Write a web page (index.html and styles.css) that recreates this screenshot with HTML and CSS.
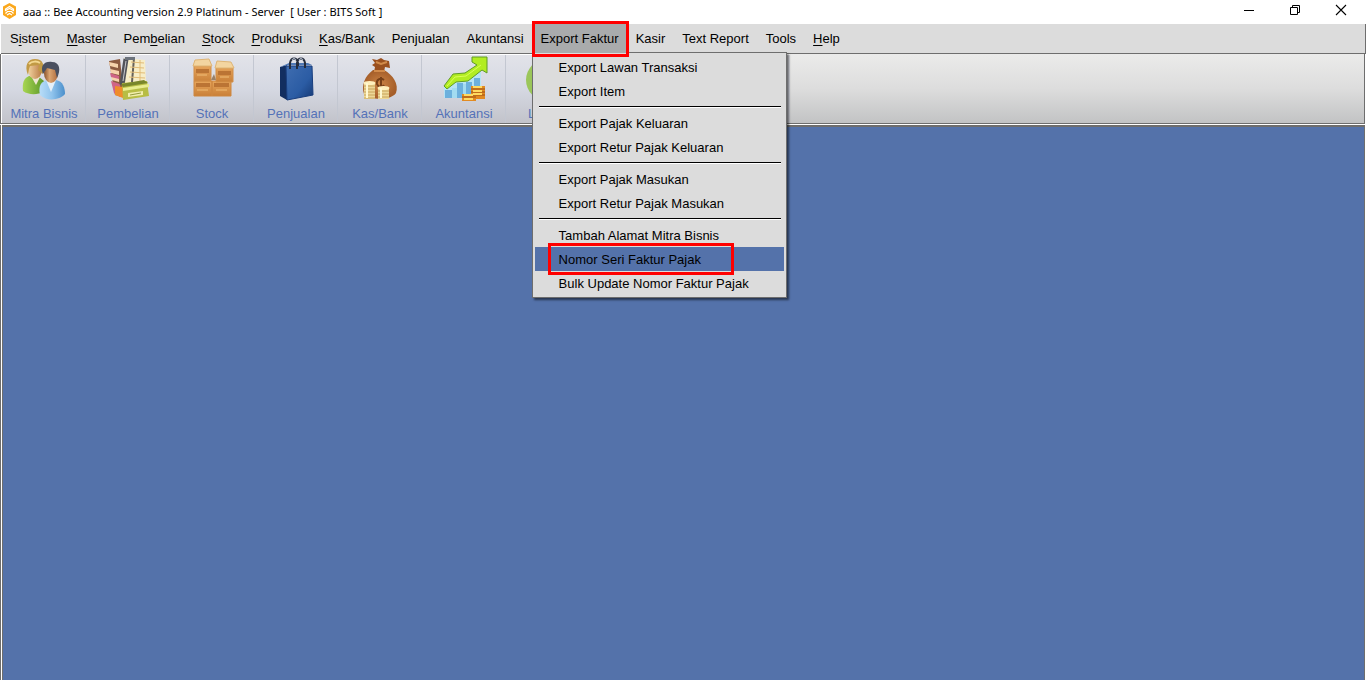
FILE: index.html
```
<!DOCTYPE html>
<html lang="id">
<head>
<meta charset="utf-8">
<title>Bee Accounting</title>
<link rel="stylesheet" href="styles.css">
</head>
<body>
<header class="titlebar">
  <svg class="logo" width="16" height="16" viewBox="0 0 16 16"><path d="M7.500 0 14 3.500V12L7.500 16 1 12V3.500z" fill="#fba81c"/><path d="M3.500 7.500V6L7.500 3.500l4 2.500v1.500l-4-2zM3.500 10.500l2-2h4l2 2M5 12l2.500-1.500L10 12" fill="none" stroke="#fff" stroke-width="1.200"/></svg>
  <h1 class="title">aaa :: Bee Accounting version 2.9 Platinum - Server &nbsp;[ User : BITS Soft ]</h1>
  <div class="window-controls">
    <button class="win" aria-label="Minimize"><svg width="12" height="12"><path d="M1 6.500h10" stroke="#000"/></svg></button>
    <button class="win" aria-label="Restore"><svg width="12" height="12" fill="none" stroke="#000"><path d="M1.500 3.500h7v7h-7zM3.500 3V1.500h7v7H9"/></svg></button>
    <button class="win" aria-label="Close"><svg width="12" height="12"><path d="M1 1l10 10M11 1 1 11" stroke="#000" stroke-width="1.100"/></svg></button>
  </div>
</header>
<nav class="menubar">
  <button class="menu">S<u>i</u>stem</button>
  <button class="menu"><u>M</u>aster</button>
  <button class="menu">Pem<u>b</u>elian</button>
  <button class="menu"><u>S</u>tock</button>
  <button class="menu"><u>P</u>roduksi</button>
  <button class="menu"><u>K</u>as/Bank</button>
  <button class="menu">Penjualan</button>
  <button class="menu">Akuntansi</button>
  <div class="menu-open">
    <button class="menu active">Export Faktur</button>
    <div class="dropdown">
      <button class="item">Export Lawan Transaksi</button>
      <button class="item">Export Item</button>
      <hr class="sep">
      <button class="item">Export Pajak Keluaran</button>
      <button class="item">Export Retur Pajak Keluaran</button>
      <hr class="sep">
      <button class="item">Export Pajak Masukan</button>
      <button class="item">Export Retur Pajak Masukan</button>
      <hr class="sep">
      <button class="item">Tambah Alamat Mitra Bisnis</button>
      <button class="item selected">Nomor Seri Faktur Pajak</button>
      <button class="item">Bulk Update Nomor Faktur Pajak</button>
    </div>
  </div>
  <button class="menu">Kasir</button>
  <button class="menu">Text Report</button>
  <button class="menu">Tools</button>
  <button class="menu"><u>H</u>elp</button>
</nav>
<div class="toolbar">
  <div class="tools">
    <button class="tool">
      <svg width="48" height="48" viewBox="0 0 48 48">
        <defs>
          <linearGradient id="skin" x1="0" x2="1"><stop offset="0" stop-color="#f2d3a0"/><stop offset="1" stop-color="#b97a45"/></linearGradient>
          <linearGradient id="skin2" x1="0" x2="1"><stop offset="0" stop-color="#8a542d"/><stop offset=".4" stop-color="#dba571"/><stop offset="1" stop-color="#b06b3c"/></linearGradient>
          <linearGradient id="green" x1="0" x2="1"><stop offset="0" stop-color="#a8d653"/><stop offset="1" stop-color="#5c9728"/></linearGradient>
          <linearGradient id="shirt" x1="0" x2="1"><stop offset="0" stop-color="#b9ddf8"/><stop offset=".5" stop-color="#8fc3ec"/><stop offset="1" stop-color="#4b8fcb"/></linearGradient>
        </defs>
        <path d="M3 36c-1-8 1-13 6-15l10 1 5 4v11c-7 3-16 3-21-1z" fill="url(#green)"/>
        <path d="m11 21 5 9 4-8z" fill="#eee6d2"/>
        <ellipse cx="15" cy="15" rx="7" ry="9" fill="url(#skin)"/>
        <path d="M8 20C4 10 8 4 15 4c8 0 10 6 8 15l-5-4 1-5-9 1-1 3z" fill="#c29a45"/>
        <path d="M9 9c3-3 8-3 11-1" stroke="#f3d890" stroke-width="2" fill="none"/>
        <path d="M20 40c-2-9 1-14 8-15h8c7 1 9 8 9 14-5 6-18 8-25 1z" fill="url(#shirt)"/>
        <path d="m26 25 5 12 5-12z" fill="#e6f0f8"/>
        <ellipse cx="31" cy="18" rx="7" ry="10" fill="url(#skin2)"/>
        <path d="M23 19c-3-8 1-13 9-12 8 0 9 8 5 16l-2-8-8-2z" fill="#4a5060"/>
      </svg>
      <span>Mitra Bisnis</span>
    </button>
    <button class="tool">
      <svg width="48" height="48" viewBox="0 0 48 48">
        <path d="M5 6 16 4l4 38-9-2z" fill="#8d5b40"/>
        <path d="m5 7 9 2v4L6 11zM6 14l9 2v4l-8-2zM7 21l8 2v4l-7-2z" fill="#f6d3ac"/>
        <path d="m6 18 9 3v3l-8-2zM7 26l9 3v13l-6-4z" fill="#cf6487"/>
        <path d="m11 31 8 1v11l-8-3z" fill="#ef8c2b"/>
        <path d="m20 3 21 2 1 22-24 4z" fill="#f7edc7"/>
        <path d="m22 4-4 26" stroke="#51535a" stroke-width="5"/>
        <path d="m22 6-3 20" stroke="#c5c7ca" stroke-width="1"/>
        <path d="m30 3-2 24" stroke="#66615a" stroke-width="2"/>
        <path d="m27 7 13 1M26 12l14 1M26 17l15 1M25 22l16 1M36 5v21" stroke="#e2bc77" stroke-width="1"/>
        <path d="M21 2h10v3H21z" fill="#6c737c"/>
        <path d="m18 28 25-2 2 15-26 4z" fill="#b7bd44"/>
        <path d="m17 29 23-4 4 3-25 4z" fill="#79862b"/>
        <path d="m19 33 26-4v3l-26 4z" fill="#e9ed91"/>
        <path d="m24 38 15-2v4l-15 2z" fill="#f1edab"/>
        <path d="m26 40 11-2" stroke="#929b3e"/>
      </svg>
      <span>Pembelian</span>
    </button>
    <button class="tool">
      <svg width="48" height="48" viewBox="0 0 48 48">
        <defs><linearGradient id="box" x2="0" y2="1"><stop offset="0" stop-color="#e7a55b"/><stop offset="1" stop-color="#c98038"/></linearGradient></defs>
        <path d="M6 26h18v15H6zM24 26h19v15H24z" fill="url(#box)" stroke="#ce8740"/>
        <path d="M6 11h17v15H6zM28 13h17v14H28z" fill="url(#box)" stroke="#d28e48"/>
        <path d="m5 11 2-6 14-1 3 7zM27 13l2-7 14 1 3 6z" fill="#f3d5a0" stroke="#dfb574"/>
        <path d="M8 14h13v4H8zM30 16h13v4H30zM8 28h14v4H8zM26 28h15v4H26z" fill="#bb7434"/>
        <path d="M9 20h10M32 22h9M9 35h11M28 35h11" stroke="#f0bd76" stroke-width="1"/>
        <path d="m23 25 3-6 2 6z" fill="#998169"/>
      </svg>
      <span>Stock</span>
    </button>
    <button class="tool">
      <svg width="48" height="48" viewBox="0 0 48 48">
        <defs><linearGradient id="bag" x2="1" y2="1"><stop offset="0" stop-color="#3f6db0"/><stop offset=".6" stop-color="#2b5ca4"/><stop offset="1" stop-color="#153873"/></linearGradient></defs>
        <path d="m8 12 7-2v35l-7-4z" fill="#122e60"/>
        <path d="M14 11h26l1 29-26 5z" fill="url(#bag)" stroke="#183d7d"/>
        <path d="m8 12 8-2h24l-4-2H17z" fill="#4f79b6"/>
        <path d="M18 14V8c1-6 7-6 8 0v3M25 14V8c1-6 7-6 8 0v5" fill="none" stroke="#252c3b" stroke-width="2"/>
        <path d="M20 5c1-2 3-2 4 0M27 5c1-2 3-2 4 0" fill="none" stroke="#c9d5e7"/>
      </svg>
      <span>Penjualan</span>
    </button>
    <button class="tool">
      <svg width="48" height="48" viewBox="0 0 48 48">
        <defs><radialGradient id="sack"><stop offset="0" stop-color="#cc8446"/><stop offset="1" stop-color="#a55e29"/></radialGradient></defs>
        <path d="M17 15C9 21 5 30 8 39c5 6 27 7 32-1 3-9-3-18-12-23z" fill="url(#sack)"/>
        <path d="m16 4 5 1 4-2 3 2 5 1 1 7-5-1-1 5H18l1-5-3-2 3-2z" fill="#9a501f"/>
        <path d="m20 7 5 2 6-2M18 16h11" fill="none" stroke="#d28b4a" stroke-width="2"/>
        <path d="M28 25c-4-3-8 0-7 4 1 3 5 4 7 1M25 22v11" fill="none" stroke="#774018" stroke-width="2"/>
        <path d="M8 28h11v16H8zM22 33h11v11H22z" fill="#edd797"/>
        <path d="M8 31h11M8 34h11M8 37h11M8 40h11M8 43h11M22 36h11M22 39h11M22 42h11" stroke="#c8a45b"/>
        <ellipse cx="13.500" cy="28" rx="6" ry="2" fill="#fff0bd"/><ellipse cx="27.500" cy="33" rx="6" ry="2" fill="#fff0bd"/>
        <path d="M11 28v15M25 33v10" stroke="#fff8d2" stroke-width="2"/>
      </svg>
      <span>Kas/Bank</span>
    </button>
    <button class="tool">
      <svg width="48" height="48" viewBox="0 0 48 48">
        <path d="M4 32 15 24l11-2 15-10v31H4z" fill="#b7e3f5"/>
        <path d="M5 35h7v8H5zM17 28h6v15h-6zM26 27h6v16h-6zM34 23h6v20h-6z" fill="#6cb0dd"/>
        <path d="M12 33h5v10h-5zM23 29h3v14h-3z" fill="#a3dcf1"/>
        <path d="M4 31 13 19l12-1 12-8-5-3V2h15v16l-5-3-14 11-12 1L7 34z" fill="#b2ed22" stroke="#619b27"/>
        <path d="m7 31 8-9 11-1 15-11" fill="none" stroke="#daff56"/>
        <path d="M31 31h14v13H31zM22 39h14v7H22z" fill="#e28b22"/>
        <path d="M31 34h14M31 37h14M31 40h14M22 42h14" stroke="#9d5015"/>
        <path d="M33 32h9M33 36h9M33 39h9M24 40h9M24 44h9" stroke="#ffdb62" stroke-width="2"/>
      </svg>
      <span>Akuntansi</span>
    </button>
    <button class="tool clipped">
      <svg width="48" height="48" viewBox="0 0 48 48"><circle cx="23" cy="25" r="21" fill="#9bc65a"/></svg>
      <span>L</span>
    </button>
  </div>
</div>
<main class="workspace"></main>
</body>
</html>
```
FILE: styles.css
```
* { box-sizing: border-box; }
body {
  margin: 0;
  min-height: 100vh;
  display: flex;
  flex-direction: column;
  background: #fff;
  color: #000;
  font: 13px/16px "Liberation Sans", Arial, sans-serif;
}
button {
  border: 0;
  padding: 0;
  background: none;
  color: inherit;
  font: inherit;
}
svg { display: block; flex-shrink: 0; }
.titlebar {
  height: 24px;
  display: flex;
  align-items: center;
  padding-left: 2px;
}
.title {
  flex: 1;
  margin: 0 0 0 5px;
  font: 11px/22px "Noto Sans", sans-serif;
}
.logo { margin-bottom: 2px; }
.window-controls { display: flex; padding-right: 2px; }
.win {
  width: 46px;
  height: 24px;
  display: flex;
  align-items: center;
  justify-content: center;
  padding-bottom: 4px;
}
.menubar {
  height: 30px;
  display: flex;
  gap: 1px;
  background: #dcdcdc;
  margin-left: 1px;
  padding-left: 1px;
  border-right: 1px solid #6e6e6e;
  border-bottom: 1px solid #6e6e6e;
}
.menu {
  height: 29px;
  padding: 0 8px;
  white-space: nowrap;
}
.menu u { text-underline-offset: 2px; }
.menu-open { position: relative; }
.active {
  background: #a9abac;
  position: relative;
  z-index: 2;
}
.active::after {
  content: "";
  position: absolute;
  inset: -3px -2px -4px -1px;
  border: 3px solid #f00;
}
.dropdown {
  position: absolute;
  z-index: 1;
  top: 28px;
  left: -1px;
  width: 255px;
  padding: 2px;
  display: flex;
  flex-direction: column;
  background: #dcdcdc;
  border: 1px solid #6e6e6e;
  box-shadow: 2px 2px 2px #0008;
}
.item {
  height: 24px;
  padding: 2px 24px 0;
  text-align: left;
  white-space: nowrap;
}
.sep {
  width: 242px;
  height: 2px;
  margin: 3px 3px 3px 4px;
  border: 0;
  border-top: 1px solid #000;
  background: #fff;
}
.selected { position: relative; background: #5472aa; }
.selected::after {
  content: "";
  position: absolute;
  inset: -4px 50px -4px 13px;
  border: 3px solid #f00;
}
.toolbar {
  height: 70px;
  margin-right: 1px;
  border: 1px solid #6e6e6e;
  border-width: 0 1px 1px;
  background: linear-gradient(#ebebea, #dddddd 50%, #c2c3c4);
}
.tools {
  width: 789px;
  height: 69px;
  display: flex;
  border-top: 1px solid #fff;
  border-left: 1px solid #fff;
  background: linear-gradient(#e2e3e9, #d5d8e2 50%, #c2c3ca);
}
.tool {
  width: 84px;
  display: flex;
  flex-direction: column;
  justify-content: flex-start;
  align-items: center;
  color: #5472b8;
  box-shadow: inset -1px 0 #c3c7d1;
}
.tool span { line-height: 20px; padding-top: 1px; }
.clipped span { align-self: flex-start; padding-left: 22px; }
.workspace {
  flex: 1;
  margin: 1px 1px 0 2px;
  border: 2px solid #6e6e6e;
  border-width: 2px 1px 0 1px;
  background: #5472aa;
  box-shadow: -2px 0 #6e6e6e;
  outline: 1px solid #fff;
}
```
